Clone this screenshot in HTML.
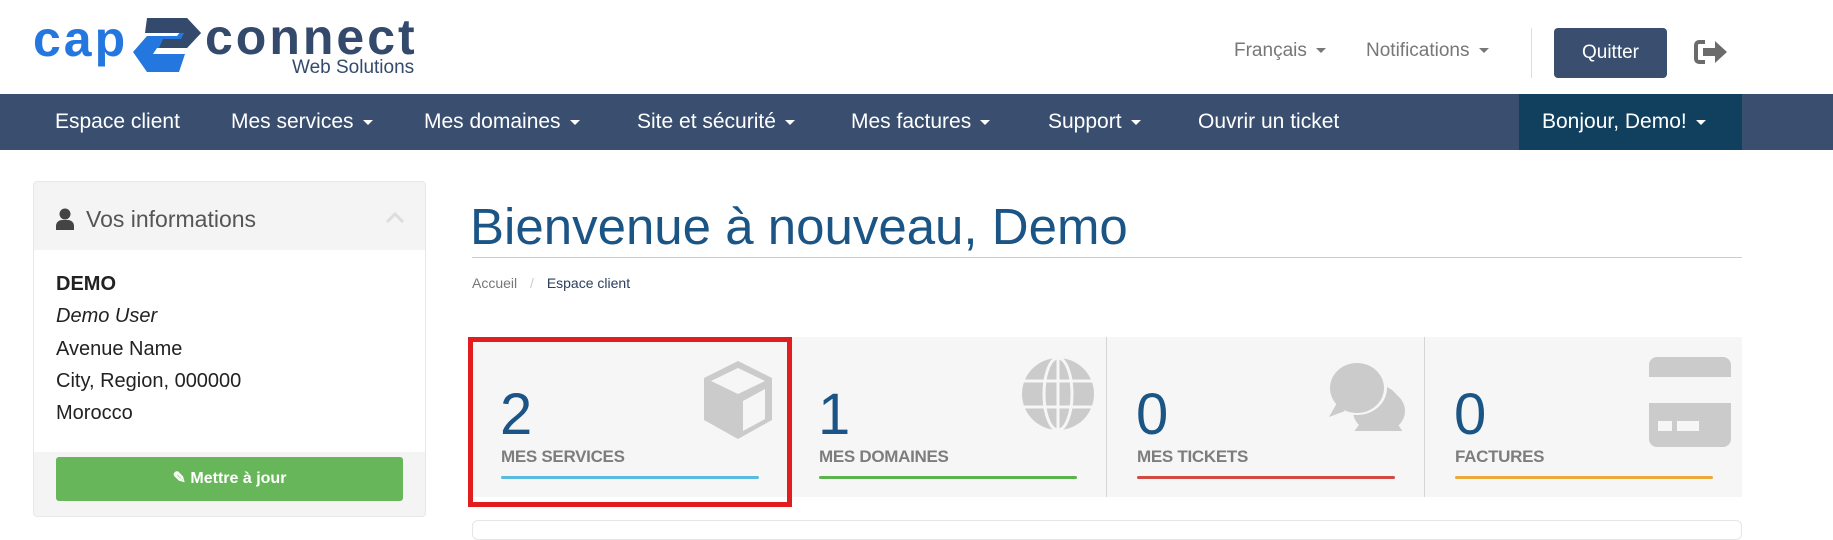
<!DOCTYPE html>
<html><head><meta charset="utf-8"><style>
*{margin:0;padding:0;box-sizing:border-box}
body{width:1833px;height:526px;overflow:hidden;background:#fff;font-family:"Liberation Sans",sans-serif;position:relative}
.a{position:absolute}
.nav{top:94px;left:0;width:1833px;height:56px;background:#3a4f6f}
.nav span{position:absolute;top:16px;color:#fff;font-size:21px;white-space:nowrap}
.car{display:inline-block;width:0;height:0;border-left:5px solid transparent;border-right:5px solid transparent;border-top:5px solid currentColor;vertical-align:middle;margin-left:9px}
.tile{position:absolute;top:337px;height:160px;width:318px}
.num{position:absolute;left:30px;top:44px;font-size:58px;color:#1b5585}
.lbl{position:absolute;left:31px;top:110px;font-size:17px;font-weight:bold;color:#7d7d7d;letter-spacing:-0.3px}
.bar{position:absolute;left:31px;top:139px;width:258px;height:3px;border-radius:2px}
.sep{position:absolute;top:337px;width:1px;height:160px;background:#d6d6d6}
</style></head><body>
<!-- logo -->
<div class="a" style="left:33px;top:10px;font-size:50px;font-weight:bold;color:#2577e0;letter-spacing:3px">cap</div>
<svg class="a" style="left:133px;top:14px" width="72" height="62" viewBox="0 0 72 62"><path d="M14 4h40l14 15-14 15H24l-4 6h32l-6 18H14L0 38l14-16h30l4-5H14z" fill="#2577e0"/><path d="M14 4h40l14 15-14 15H26l4-9h18l3-6H12z" fill="#344a6c"/></svg>
<div class="a" style="left:205px;top:8px;font-size:50px;font-weight:bold;color:#344a6c;letter-spacing:3px">connect</div>
<div class="a" style="left:292px;top:57px;font-size:19px;color:#344a6c">Web Solutions</div>
<!-- top right -->
<div class="a" style="left:1234px;top:40px;font-size:19px;color:#777">Français<span class="car"></span></div>
<div class="a" style="left:1366px;top:40px;font-size:19px;color:#777">Notifications<span class="car"></span></div>
<div class="a" style="left:1531px;top:28px;width:1px;height:50px;background:#ddd"></div>
<div class="a" style="left:1554px;top:28px;width:113px;height:50px;background:#3a4f6f;border-radius:4px;color:#fff;font-size:19px;text-align:center;line-height:50px">Quitter</div>
<svg class="a" style="left:1694px;top:40px" width="34" height="24" viewBox="0 0 34 24"><path d="M11 2H5a3 3 0 0 0-3 3v14a3 3 0 0 0 3 3h6" stroke="#6b6b6b" stroke-width="4" fill="none"/><path d="M9 8h12V1l12 11-12 11v-7H9z" fill="#6b6b6b"/></svg>
<!-- nav -->
<div class="a nav">
<span style="left:55px">Espace client</span>
<span style="left:231px">Mes services<i class="car"></i></span>
<span style="left:424px">Mes domaines<i class="car"></i></span>
<span style="left:637px">Site et sécurité<i class="car"></i></span>
<span style="left:851px">Mes factures<i class="car"></i></span>
<span style="left:1048px">Support<i class="car"></i></span>
<span style="left:1198px">Ouvrir un ticket</span>
<div style="position:absolute;left:1519px;top:0;width:223px;height:56px;background:#11405f"></div>
<span style="left:1542px">Bonjour, Demo!<i class="car"></i></span>
</div>
<!-- sidebar -->
<div class="a" style="left:33px;top:181px;width:393px;height:336px;border:1px solid #e8e8e8;border-radius:4px;background:#f4f4f4;overflow:hidden">
<svg style="position:absolute;left:21px;top:26px" width="20" height="22" viewBox="0 0 20 22"><circle cx="10" cy="6" r="5.5" fill="#444"/><path d="M1 22v-4a6 6 0 0 1 6-6h6a6 6 0 0 1 6 6v4z" fill="#444"/></svg>
<div style="position:absolute;left:52px;top:24px;font-size:23px;color:#555">Vos informations</div>
<svg style="position:absolute;left:351px;top:30px" width="20" height="12"><path d="M2 10l8-8 8 8" stroke="#ddd" stroke-width="3" fill="none"/></svg>
<div style="position:absolute;left:0;top:68px;width:393px;height:202px;background:#fff;font-size:20px;color:#222;line-height:32.3px;padding:18px 0 0 22px">
<b>DEMO</b><br><i>Demo User</i><br>Avenue Name<br>City, Region, 000000<br>Morocco</div>
<div style="position:absolute;left:22px;top:275px;width:347px;height:44px;background:#67b65a;border-radius:3px;color:#fff;font-size:16px;font-weight:bold;text-align:center;line-height:44px">✎ Mettre à jour</div>
</div>
<!-- main -->
<div class="a" style="left:470px;top:197px;font-size:51px;color:#1b5585;white-space:nowrap">Bienvenue à nouveau, Demo</div>
<div class="a" style="left:472px;top:257px;width:1270px;height:1px;background:#ccc"></div>
<div class="a" style="left:472px;top:275px;font-size:14px;color:#777">Accueil <span style="color:#ccc;margin:0 9px">/</span> <span style="color:#2b3e5c">Espace client</span></div>
<div class="a" style="left:472px;top:337px;width:1270px;height:160px;background:#f6f6f6"></div>
<div class="sep" style="left:1106px"></div><div class="sep" style="left:1424px"></div>
<div class="tile" style="left:470px">
<svg style="position:absolute;left:231px;top:24px" width="74" height="78" viewBox="0 0 74 78"><path d="M37 0l34 17v42L37 78 3 59V17z" fill="#cbcbcb"/><path d="M10 20l27-13 27 13-27 13z" fill="#f6f6f6"/><path d="M42 40l22-12v30l-22 12z" fill="#f6f6f6"/></svg>
<div class="num">2</div><div class="lbl">MES SERVICES</div><div class="bar" style="background:#5bbae0"></div></div>
<div class="tile" style="left:788px">
<svg style="position:absolute;left:233px;top:20px" width="74" height="74" viewBox="0 0 74 74"><circle cx="37" cy="37" r="36" fill="#cbcbcb"/><ellipse cx="37" cy="37" rx="14" ry="36" fill="none" stroke="#f6f6f6" stroke-width="3"/><path d="M37 0v74M0 24h74M0 50h74" stroke="#f6f6f6" stroke-width="3"/></svg>
<div class="num">1</div><div class="lbl">MES DOMAINES</div><div class="bar" style="background:#5cb24f"></div></div>
<div class="tile" style="left:1106px">
<svg style="position:absolute;left:221px;top:24px" width="84" height="70" viewBox="0 0 84 70"><path d="M60 26a27 27 0 0 1-3 50 32 32 0 0 1-34 0" fill="#cbcbcb"/><ellipse cx="52" cy="50" rx="26" ry="22" fill="#cbcbcb"/><path d="M70 62l8 12-14-5z" fill="#cbcbcb"/><ellipse cx="30" cy="27" rx="30" ry="27" fill="#f6f6f6"/><ellipse cx="30" cy="27" rx="27" ry="25" fill="#cbcbcb"/><path d="M10 42L2 56l16-6z" fill="#cbcbcb"/></svg>
<div class="num">0</div><div class="lbl">MES TICKETS</div><div class="bar" style="background:#d14b44"></div></div>
<div class="tile" style="left:1424px">
<svg style="position:absolute;left:225px;top:20px" width="82" height="90" viewBox="0 0 82 90"><rect x="0" y="0" width="82" height="90" rx="8" fill="#cbcbcb"/><rect x="0" y="20" width="82" height="26" fill="#f6f6f6"/><rect x="9" y="64" width="14" height="10" fill="#f6f6f6"/><rect x="28" y="64" width="22" height="10" fill="#f6f6f6"/></svg>
<div class="num">0</div><div class="lbl">FACTURES</div><div class="bar" style="background:#e9a93b"></div></div>
<div class="a" style="left:468px;top:337px;width:324px;height:170px;border:5px solid #e21d1f"></div>
<div class="a" style="left:472px;top:520px;width:1270px;height:20px;border:1px solid #e6e6e6;border-radius:6px"></div>
</body></html>
